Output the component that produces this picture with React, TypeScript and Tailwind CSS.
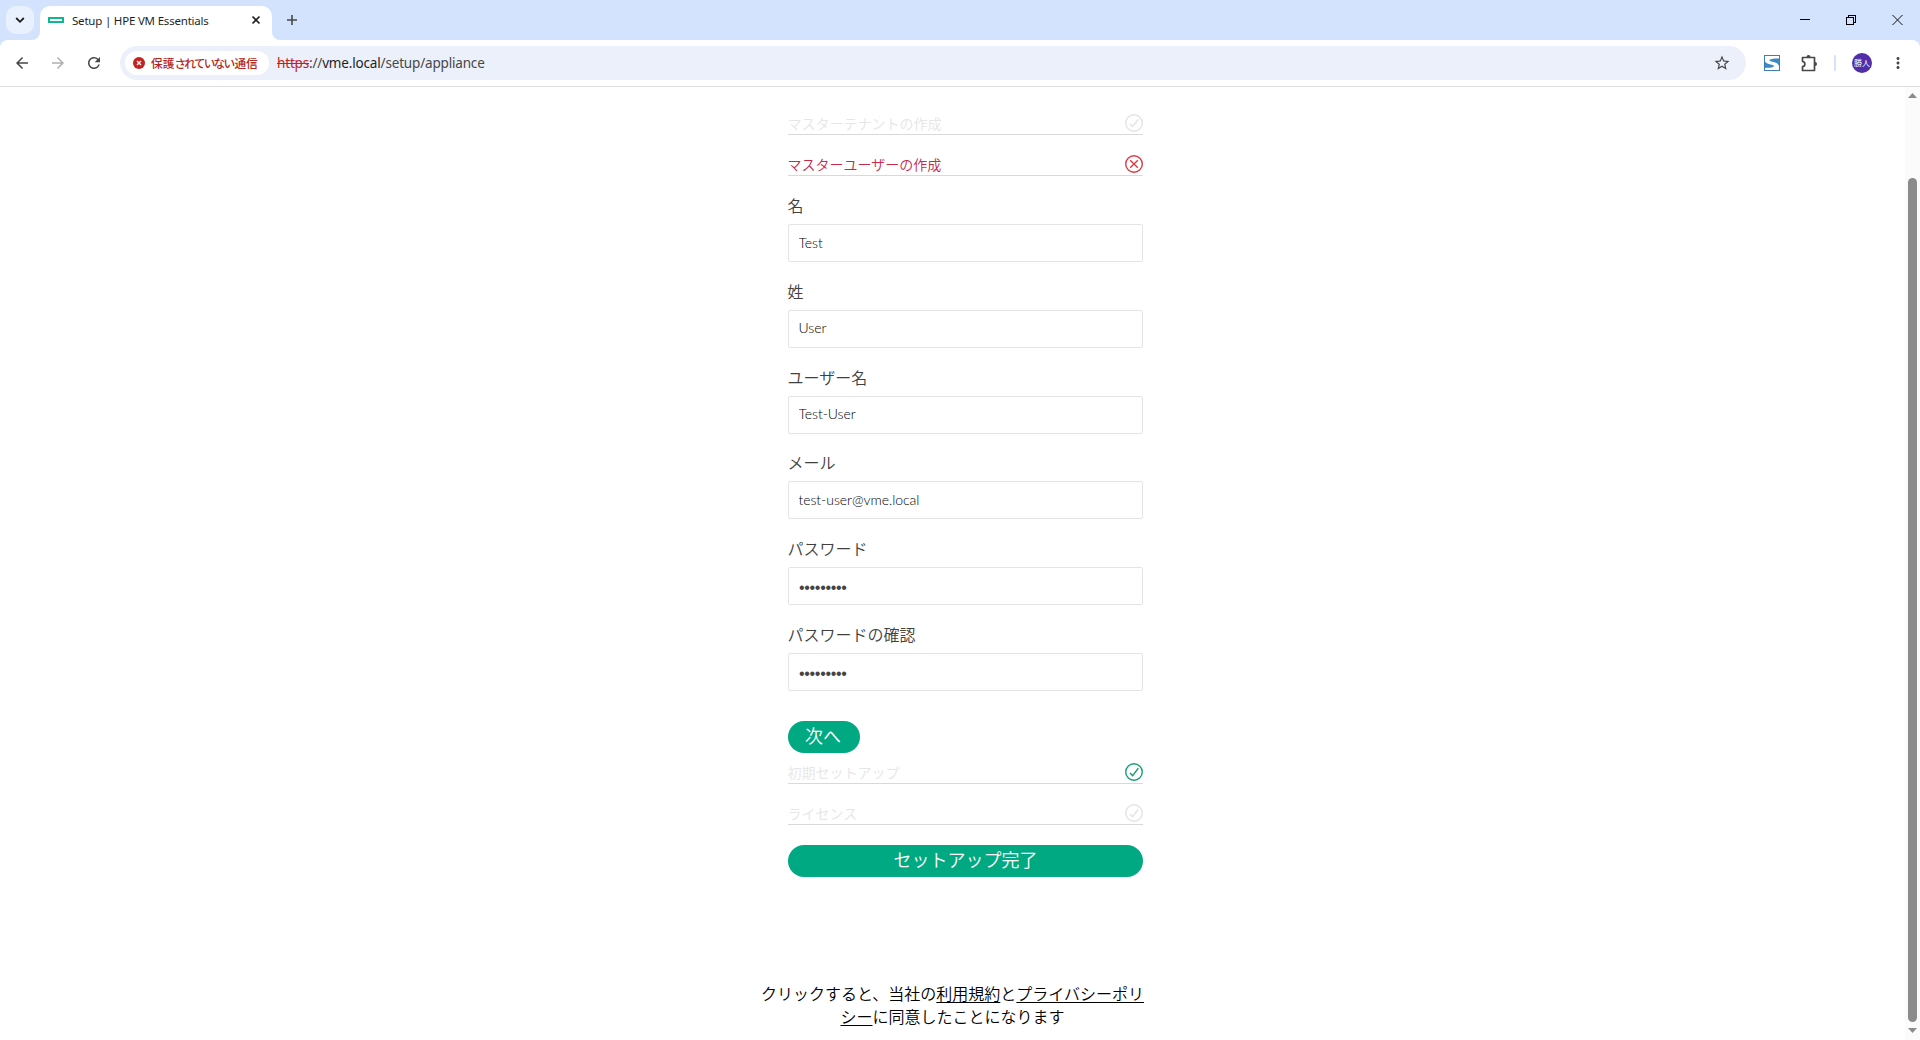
import { MdArrowBack, MdArrowForward, MdRefresh, MdStarBorder, MdMoreVert } from "react-icons/md";
import clsx from "clsx";

const fields = [
  { id: "firstName", label: "名", value: "Test" },
  { id: "lastName", label: "姓", value: "User" },
  { id: "username", label: "ユーザー名", value: "Test-User" },
  { id: "email", label: "メール", value: "test-user@vme.local" },
  { id: "password", label: "パスワード", value: "secret123", secret: true },
  { id: "confirm", label: "パスワードの確認", value: "secret123", secret: true },
];

type Status = "idle" | "done" | "error";

const StatusIcon = ({ status }: { status: Status }) => (
  <svg
    width="18"
    height="18"
    viewBox="0 0 18 18"
    fill="none"
    strokeWidth="1.4"
    className={clsx(
      status === "idle" && "stroke-[#e4e4e4]",
      status === "done" && "stroke-[#1a9e73]",
      status === "error" && "stroke-[#dc3a44]"
    )}
  >
    <circle cx="9" cy="9" r="8.3" />
    {status === "error" ? (
      <path d="M5.2 5.2l7.6 7.6M12.8 5.2l-7.6 7.6" />
    ) : (
      <path d="M5 9.900l2.600 2.700L13.300 5.200" />
    )}
  </svg>
);

const SectionTitle = ({ title, status }: { title: string; status: Status }) => (
  <div className="flex h-[21px] items-start justify-between border-b border-[#d9d9d9]">
    <span
      className={clsx(
        "-ml-[0.5px] text-[14px] leading-[18px]",
        status === "error" ? "text-[#c8284b]" : "text-[#e6e6e6]"
      )}
    >
      {title}
    </span>
    <StatusIcon status={status} />
  </div>
);

const TabStrip = () => (
  <div className="flex h-10 bg-[#d3e3fd] pl-1.5">
    <button className="mt-1.5 flex h-7 w-7 items-center justify-center rounded-[10px] bg-[#e9f1fe]">
      <svg width="10" height="10" viewBox="0 0 10 10" fill="none" stroke="#1f1f1f" strokeWidth="1.8">
        <path d="M1.2 3l3.8 3.8L8.8 3" />
      </svg>
    </button>
    <div className="relative ml-1.5 mt-1.5 flex h-[34px] w-[232px] items-center rounded-t-[10px] bg-white pb-[6px] pl-2 pr-[11px]">
      {/* curved feet of the active tab */}
      <svg className="absolute -left-2 bottom-0" width="8" height="8">
        <path d="M8 0v8H0a8 8 0 0 0 8-8z" fill="#fff" />
      </svg>
      <svg className="absolute -right-2 bottom-0" width="8" height="8">
        <path d="M0 0v8h8a8 8 0 0 1-8-8z" fill="#fff" />
      </svg>
      <svg width="16" height="6" viewBox="0 0 16 6" fill="none">
        <rect x="1" y="1" width="14" height="4" stroke="#10b890" strokeWidth="2" />
      </svg>
      <span className="ml-2 flex-1 whitespace-nowrap pt-px text-[11.5px] leading-4 tracking-[-0.2px] text-[#1f1f1f]">
        Setup | HPE VM Essentials
      </span>
      <svg width="10" height="10" viewBox="0 0 10 10" stroke="#1f1f1f" strokeWidth="1.6">
        <path d="M1.5 1.5l7 7M8.5 1.5l-7 7" />
      </svg>
    </div>
    <svg className="ml-[15px] mt-[15px]" width="10" height="10" viewBox="0 0 10 10" stroke="#474747" strokeWidth="1.6">
      <path d="M5 0v10M0 5h10" />
    </svg>
    <div className="ml-auto mr-[17px] flex items-start gap-9 pt-[15px]">
      <svg width="10" height="10" viewBox="0 0 10 10" stroke="#000" shapeRendering="crispEdges">
        <path d="M0 4.5h10" />
      </svg>
      <svg width="10" height="10" viewBox="0 0 10 10" fill="none" stroke="#000" shapeRendering="crispEdges">
        <path d="M.5 2.5h7v7h-7zM2.5 2.5v-2h7v7h-2" />
      </svg>
      <svg width="11" height="10" viewBox="0 0 10 10" stroke="#111" strokeWidth="1">
        <path d="M0 0l10 10M10 0L0 10" />
      </svg>
    </div>
  </div>
);

const Toolbar = () => (
  <div className="bg-[#d3e3fd]">
    <div className="flex h-[47px] items-center rounded-t-lg border-b border-[#dedfe1] bg-white pl-[13px] pr-[13px]">
      <MdArrowBack className="h-[18px] w-[18px] text-[#474747]" />
      <MdArrowForward className="ml-[18px] h-[18px] w-[18px] text-[#b0b0b0]" />
      <MdRefresh className="ml-[18px] h-[18px] w-[18px] text-[#474747]" />
      <div className="ml-[17px] flex h-[34px] w-[1626px] items-center rounded-full bg-[#ecf0fa] pl-[5px] pr-[15px]">
        <div className="flex h-6 w-36 items-center rounded-full bg-white pl-2">
          <svg width="12" height="12" viewBox="0 0 12 12" fill="none" stroke="#fff" strokeWidth="1.3">
            <circle cx="6" cy="6" r="6" fill="#c5221f" stroke="none" />
            <path d="M4 4l4 4M8 4l-4 4" />
          </svg>
          <span className="ml-1.5 whitespace-nowrap text-[11.7px] font-medium leading-4 text-[#b3261e]">
            保護<span className="tracking-[-1.8px]">されていない</span>
            <span className="ml-px">通信</span>
          </span>
        </div>
        <span className="ml-2 whitespace-nowrap text-[13.5px] leading-5 tracking-[-0.17px] text-[#474747]">
          <span className="text-[#c5221f] line-through">https</span>://
          <span className="text-[#1f1f1f]">vme.local</span>/setup/appliance
        </span>
        <MdStarBorder className="ml-auto h-[18px] w-[18px] text-[#474747]" />
      </div>
      <svg className="ml-[18px]" width="16" height="16" viewBox="0 0 16 16" fill="none">
        <rect x=".5" y=".5" width="15" height="15" fill="#fff" stroke="#3b7fb5" />
        <path
          d="M15 3.500v8.500c0-2.800-1.700-4-5.500-5C7 6.300 5.500 6 5.500 5.200 5.500 4 9 3.500 15 3.500zM1 6.500c1.300 1.800 3.400 2.500 5.500 3 2 .5 3.500.8 3.500 1.600C10 12.400 6 13 1 13z"
          fill="#3b8ac4"
        />
      </svg>
      <svg className="ml-[21px]" width="17" height="17" viewBox="0 0 17 17" fill="none" stroke="#474747" strokeWidth="1.7">
        <path d="M1.500 2.500h12v13h-12v-3.800c3.200-.5 3.200-4.900 0-5.400z" strokeLinejoin="round" />
        <path d="M5.500 2a2 2 0 0 1 4 0zM14 7a2 2 0 0 1 0 4z" fill="#474747" stroke="none" />
      </svg>
      <div className="ml-4 h-4 w-0.5 rounded bg-[#d3e3fd]" />
      <div className="ml-4 flex h-5 w-5 items-center justify-center rounded-full bg-[#512da8] text-[8px] leading-none text-white">
        勝人
      </div>
      <MdMoreVert className="ml-auto h-[18px] w-[18px] text-[#474747]" />
    </div>
  </div>
);

const Scrollbar = () => (
  <div className="flex w-[15px] flex-col items-center bg-[#fbfbfb] pb-[7px] pt-1.5">
    <svg width="9" height="5" viewBox="0 0 9 5" fill="#8b8b8b">
      <path d="M4.500 0L9 5H0z" />
    </svg>
    <div className="mb-1.5 mt-20 w-[9px] flex-1 rounded-full bg-[#8b8b8b]" />
    <svg width="9" height="5" viewBox="0 0 9 5" fill="#8b8b8b">
      <path d="M0 0h9L4.500 5z" />
    </svg>
  </div>
);

const SetupForm = () => (
  <form className="mx-auto w-[355px] pt-[27px]">
    <SectionTitle title="マスターテナントの作成" status="idle" />
    <div className="mt-5">
      <SectionTitle title="マスターユーザーの作成" status="error" />
    </div>

    <div className="mt-[18px]">
      {fields.map((field) => (
        <div key={field.id} className="h-[85.75px]">
          <label htmlFor={field.id} className="-ml-[0.5px] mb-2 block text-[16px] leading-[22px] text-[#404040]">
            {field.label}
          </label>
          <input
            id={field.id}
            type={field.secret ? "password" : "text"}
            defaultValue={field.value}
            className={clsx(
              "block h-[38px] w-full rounded-[2px] border border-[#e3e4e8] outline-none",
              field.secret
                ? "px-2.5 pt-1 font-['Liberation_Sans',sans-serif] text-[16px] tracking-[-0.32px] text-[#444]"
                : "px-[9.5px] pb-0.5 font-['Lato','Noto_Sans_CJK_JP',sans-serif] text-[14px] font-light tracking-[-0.05px] text-black"
            )}
          />
        </div>
      ))}
    </div>

    <button type="button" className="mt-[12.5px] block h-8 w-[72px] rounded-full bg-[#01a982] pr-0.5 text-[18px] font-[350] leading-[28px] text-white">
      <span className="block h-8">次へ</span>
    </button>
    <div className="mt-2.5 flex flex-col gap-5">
      <SectionTitle title="初期セットアップ" status="done" />
      <SectionTitle title="ライセンス" status="idle" />
    </div>
    <button type="button" className="mt-5 block h-8 w-full rounded-full bg-[#01a982] text-[18px] font-[350] leading-[28px] text-white">
      <span className="block h-8">セットアップ完了</span>
    </button>
  </form>
);

const App = () => (
  <div className="flex h-[1040px] w-[1920px] flex-col overflow-hidden bg-white font-['Noto_Sans','Noto_Sans_CJK_JP',sans-serif]">
    <TabStrip />
    <Toolbar />
    <div className="flex min-h-0 flex-1 font-['Noto_Sans_CJK_JP',sans-serif] font-[350]">
      <main className="flex-1 pl-[26px]">
        <SetupForm />
        <p className="mx-auto mt-[105px] w-[386px] -translate-x-[13px] text-center text-[16px] leading-[23px] text-black">
          クリックすると、当社の<a className="underline underline-offset-2">利用規約</a>と
          <a className="underline underline-offset-2">プライバシーポリシー</a>に同意したことになります
        </p>
      </main>
      <Scrollbar />
    </div>
  </div>
);

export default App;
